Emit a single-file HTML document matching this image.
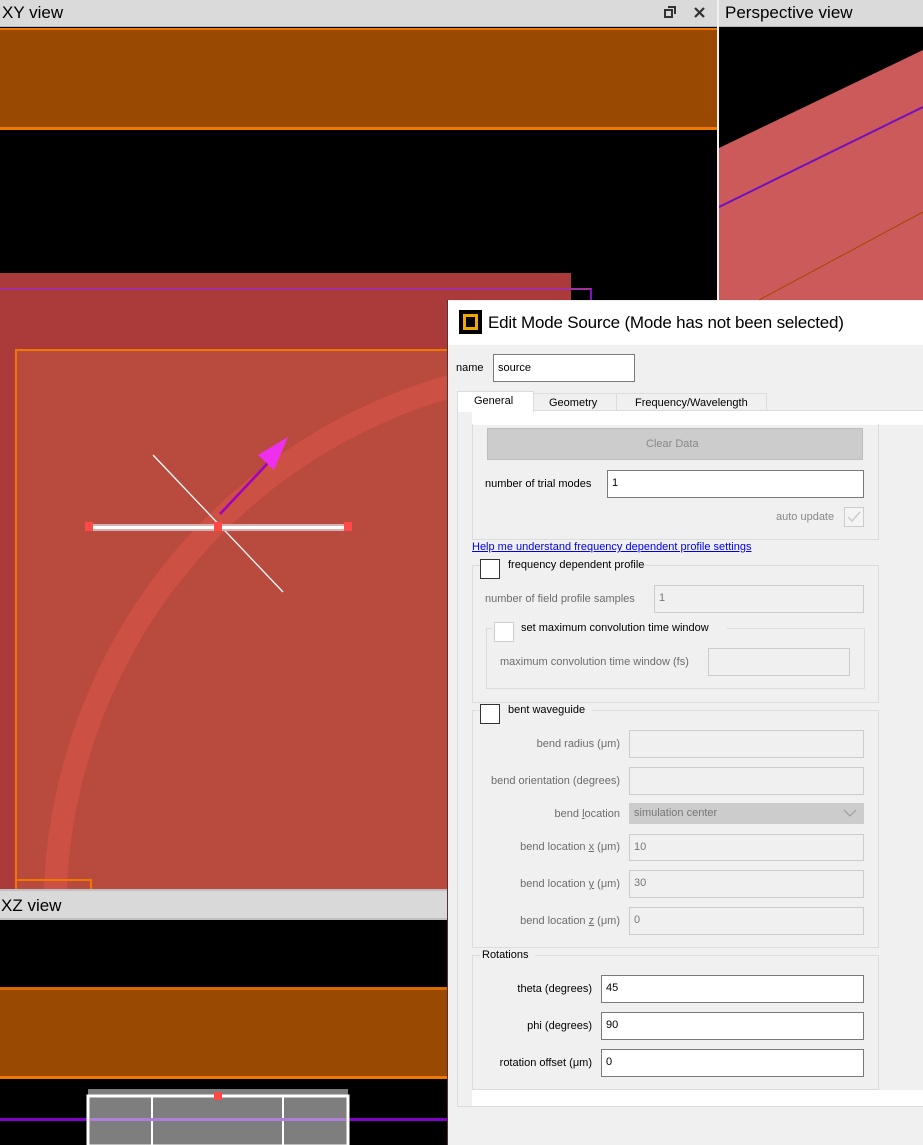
<!DOCTYPE html>
<html><head><meta charset="utf-8"><style>
*{margin:0;padding:0;box-sizing:border-box}
body{width:923px;height:1145px;position:relative;overflow:hidden;background:#000;font-family:"Liberation Sans","Noto Sans CJK JP",sans-serif}
.a{position:absolute}
.t{position:absolute;font-size:11px;color:#000;white-space:nowrap;line-height:14px}
.g{color:#6d6d6d}
.in{position:absolute;background:#fff;border:1px solid #7a7a7a;font-size:11px;padding-left:4px;line-height:25px}
.dis{position:absolute;background:#f0f0f0;border:1px solid #ccc;font-size:11px;color:#777;padding-left:4px;line-height:25px}
.grp{position:absolute;border:1px solid #dcdcdc}
.cb{position:absolute;width:20px;height:20px;background:#fff;border:1px solid #333}
</style></head><body>
<div class="a" style="left:0;top:0;width:923px;height:27px;background:#dadada;border-bottom:1px solid #b8b8b8"></div>
<div class="a" style="left:717px;top:0;width:2px;height:300px;background:#f0f0f0"></div>
<div class="a" style="left:2px;top:3px;font-size:17px;color:#000">XY view</div>
<div class="a" style="left:725px;top:3px;font-size:17px;color:#000">Perspective view</div>
<svg class="a" style="left:660px;top:4px" width="50" height="18"><rect x="5" y="6" width="7" height="7" fill="none" stroke="#333" stroke-width="2"/><path d="M8 3h7v7" fill="none" stroke="#333" stroke-width="2"/><path d="M35 4l9 9M44 4l-9 9" stroke="#333" stroke-width="2.2"/></svg>
<div class="a" style="left:0;top:28px;width:717px;height:102px;background:#9a4a00;border-top:2px solid #f07800;border-bottom:3px solid #f07800"></div>
<div class="a" style="left:0;top:273px;width:571px;height:616px;background:#ab3a3a"></div>
<div class="a" style="left:0;top:288px;width:592px;height:15px;border-top:2px solid #a030a0;border-right:2px solid #8010c0"></div>
<div class="a" style="left:15px;top:349px;width:440px;height:540px;background:#b94a3e;border-left:2px solid #f07800;border-top:2px solid #f07800"></div>
<svg class="a" style="left:0;top:340px" width="450" height="549">
<circle cx="601" cy="571" r="546" fill="none" stroke="#cd5045" stroke-width="23"/>
<rect x="16" y="540" width="75" height="12" fill="none" stroke="#f07800" stroke-width="2"/>
<line x1="153" y1="115" x2="283" y2="252" stroke="#fff" stroke-width="1.3"/>
<rect x="89" y="184" width="259" height="7" fill="#d8b0b0"/>
<rect x="89" y="186" width="259" height="3" fill="#fff"/>
<rect x="85" y="182" width="8" height="9" fill="#ff4848"/>
<rect x="214" y="182" width="8" height="9" fill="#ff4848"/>
<rect x="344" y="182" width="8" height="9" fill="#ff4848"/>
<line x1="220" y1="174" x2="268" y2="123" stroke="#a000c0" stroke-width="2.5"/>
<polygon points="288,97 258,115 274,130" fill="#ee30ee"/>
</svg>
<svg class="a" style="left:719px;top:28px" width="204" height="272">
<rect width="204" height="272" fill="#000"/>
<polygon points="0,120 204,22 204,272 0,272" fill="#cd5a5a"/>
<line x1="0" y1="179" x2="204" y2="79" stroke="#7010c0" stroke-width="2"/>
<line x1="40" y1="272" x2="204" y2="184" stroke="#a04800" stroke-width="1"/>
</svg>
<div class="a" style="left:0;top:889px;width:448px;height:31px;background:#d9d9d9;border-top:2px solid #c0c0c0;border-bottom:2px solid #c0c0c0"></div>
<div class="a" style="left:1px;top:896px;font-size:17px;color:#000">XZ view</div>
<div class="a" style="left:0;top:987px;width:448px;height:92px;background:#9a4a00;border-top:3px solid #d86a00;border-bottom:3px solid #f07800"></div>
<div class="a" style="left:0;top:1118px;width:448px;height:3px;background:#8000c8"></div>
<svg class="a" style="left:86px;top:1088px" width="266" height="57">
<rect x="2" y="1" width="260" height="7" fill="#7e7e7e"/>
<rect x="2" y="8" width="260" height="50" fill="#7e7e7e" stroke="#fff" stroke-width="3"/>
<line x1="66" y1="8" x2="66" y2="57" stroke="#fff" stroke-width="2"/>
<line x1="197" y1="8" x2="197" y2="57" stroke="#fff" stroke-width="2"/>
<rect x="4" y="30" width="256" height="3" fill="#b080d8"/>
<rect x="128" y="4" width="8" height="8" fill="#ff4848"/>
</svg>
<div class="a" style="left:447px;top:300px;width:476px;height:845px;background:#f0f0f0;border-left:1px solid #5a3030"></div>
<div class="a" style="left:448px;top:301px;width:475px;height:44px;background:#fff"></div>
<div class="a" style="left:459px;top:310px;width:23px;height:24px;background:#000"></div>
<div class="a" style="left:463px;top:314px;width:15px;height:16px;border:3px solid #f0a800"></div>
<div class="a" style="left:488px;top:313px;font-size:17px;color:#000;letter-spacing:-0.2px">Edit Mode Source (Mode has not been selected)</div>
<div class="t" style="left:456px;top:361px">name</div>
<div class="in" style="left:493px;top:354px;width:142px;height:28px;line-height:26px">source</div>
<div class="a" style="left:457px;top:410px;width:470px;height:697px;background:#f0f0f0;border:1px solid #dcdcdc"></div>
<div class="a" style="left:472px;top:411px;width:451px;height:14px;background:#fff"></div>
<div class="a" style="left:472px;top:1090px;width:451px;height:16px;background:#fff"></div>
<div class="a" style="left:533px;top:393px;width:84px;height:18px;background:#f0f0f0;border:1px solid #dcdcdc"></div>
<div class="a" style="left:616px;top:393px;width:151px;height:18px;background:#f0f0f0;border:1px solid #dcdcdc"></div>
<div class="a" style="left:457px;top:391px;width:77px;height:21px;background:#fff;border:1px solid #dcdcdc;border-bottom:none"></div>
<div class="t" style="left:474px;top:394px">General</div>
<div class="t" style="left:549px;top:396px">Geometry</div>
<div class="t" style="left:635px;top:396px">Frequency/Wavelength</div>
<div class="grp" style="left:472px;top:424px;width:407px;height:116px;border-top:none"></div>
<div class="a" style="left:487px;top:428px;width:376px;height:32px;background:#cccccc;border:1px solid #bdbdbd"></div>
<div class="t g" style="left:646px;top:437px;color:#888">Clear Data</div>
<div class="t" style="left:485px;top:477px">number of trial modes</div>
<div class="in" style="left:607px;top:470px;width:257px;height:28px">1</div>
<div class="t g" style="left:776px;top:510px;color:#888">auto update</div>
<div class="a" style="left:844px;top:507px;width:20px;height:20px;border:1px solid #ccc;background:#f4f4f4"></div>
<svg class="a" style="left:844px;top:507px" width="20" height="20"><path d="M4 10l4 4 8-9" fill="none" stroke="#ccc" stroke-width="1.5"/></svg>
<div class="t" style="left:472px;top:540px;color:#0000ee;text-decoration:underline">Help me understand frequency dependent profile settings</div>
<div class="grp" style="left:472px;top:565px;width:407px;height:138px"></div>
<div class="a" style="left:500px;top:559px;width:130px;height:14px;background:#f0f0f0"></div>
<div class="cb" style="left:480px;top:559px"></div>
<div class="t" style="left:508px;top:558px">frequency dependent profile</div>
<div class="t g" style="left:485px;top:592px">number of field profile samples</div>
<div class="dis" style="left:654px;top:585px;width:210px;height:28px">1</div>
<div class="grp" style="left:486px;top:628px;width:379px;height:61px"></div>
<div class="a" style="left:492px;top:621px;width:235px;height:14px;background:#f0f0f0"></div>
<div class="a" style="left:494px;top:622px;width:20px;height:20px;background:#fff;border:1px solid #ccc"></div>
<div class="t" style="left:521px;top:621px">set maximum convolution time window</div>
<div class="t g" style="left:500px;top:655px">maximum convolution time window (fs)</div>
<div class="dis" style="left:708px;top:648px;width:142px;height:28px"></div>
<div class="grp" style="left:472px;top:710px;width:407px;height:238px"></div>
<div class="a" style="left:500px;top:704px;width:92px;height:14px;background:#f0f0f0"></div>
<div class="cb" style="left:480px;top:704px"></div>
<div class="t" style="left:508px;top:703px">bent waveguide</div>
<div class="t g" style="left:472px;top:737px;width:148px;text-align:right">bend radius (μm)</div>
<div class="dis" style="left:629px;top:730px;width:235px;height:28px"></div>
<div class="t g" style="left:472px;top:774px;width:148px;text-align:right">bend orientation (degrees)</div>
<div class="dis" style="left:629px;top:767px;width:235px;height:28px"></div>
<div class="t g" style="left:472px;top:807px;width:148px;text-align:right">bend <u>l</u>ocation</div>
<div class="dis" style="left:629px;top:803px;width:235px;height:21px;background:#ccc;line-height:19px">simulation center</div>
<svg class="a" style="left:843px;top:808px" width="14" height="10"><path d="M1 2l6 6 6-6" fill="none" stroke="#999" stroke-width="1"/></svg>
<div class="t g" style="left:472px;top:840px;width:148px;text-align:right">bend location <u>x</u> (μm)</div>
<div class="dis" style="left:629px;top:834px;width:235px;height:27px">10</div>
<div class="t g" style="left:472px;top:877px;width:148px;text-align:right">bend location <u>y</u> (μm)</div>
<div class="dis" style="left:629px;top:870px;width:235px;height:28px">30</div>
<div class="t g" style="left:472px;top:914px;width:148px;text-align:right">bend location <u>z</u> (μm)</div>
<div class="dis" style="left:629px;top:907px;width:235px;height:28px">0</div>
<div class="grp" style="left:472px;top:955px;width:407px;height:135px"></div>
<div class="a" style="left:480px;top:948px;width:55px;height:14px;background:#f0f0f0"></div>
<div class="t" style="left:482px;top:948px">Rotations</div>
<div class="t" style="left:472px;top:982px;width:120px;text-align:right">theta (degrees)</div>
<div class="in" style="left:601px;top:975px;width:263px;height:28px">45</div>
<div class="t" style="left:472px;top:1019px;width:120px;text-align:right">phi (degrees)</div>
<div class="in" style="left:601px;top:1012px;width:263px;height:28px">90</div>
<div class="t" style="left:472px;top:1056px;width:120px;text-align:right">rotation offset (μm)</div>
<div class="in" style="left:601px;top:1049px;width:263px;height:28px">0</div>
</body></html>
